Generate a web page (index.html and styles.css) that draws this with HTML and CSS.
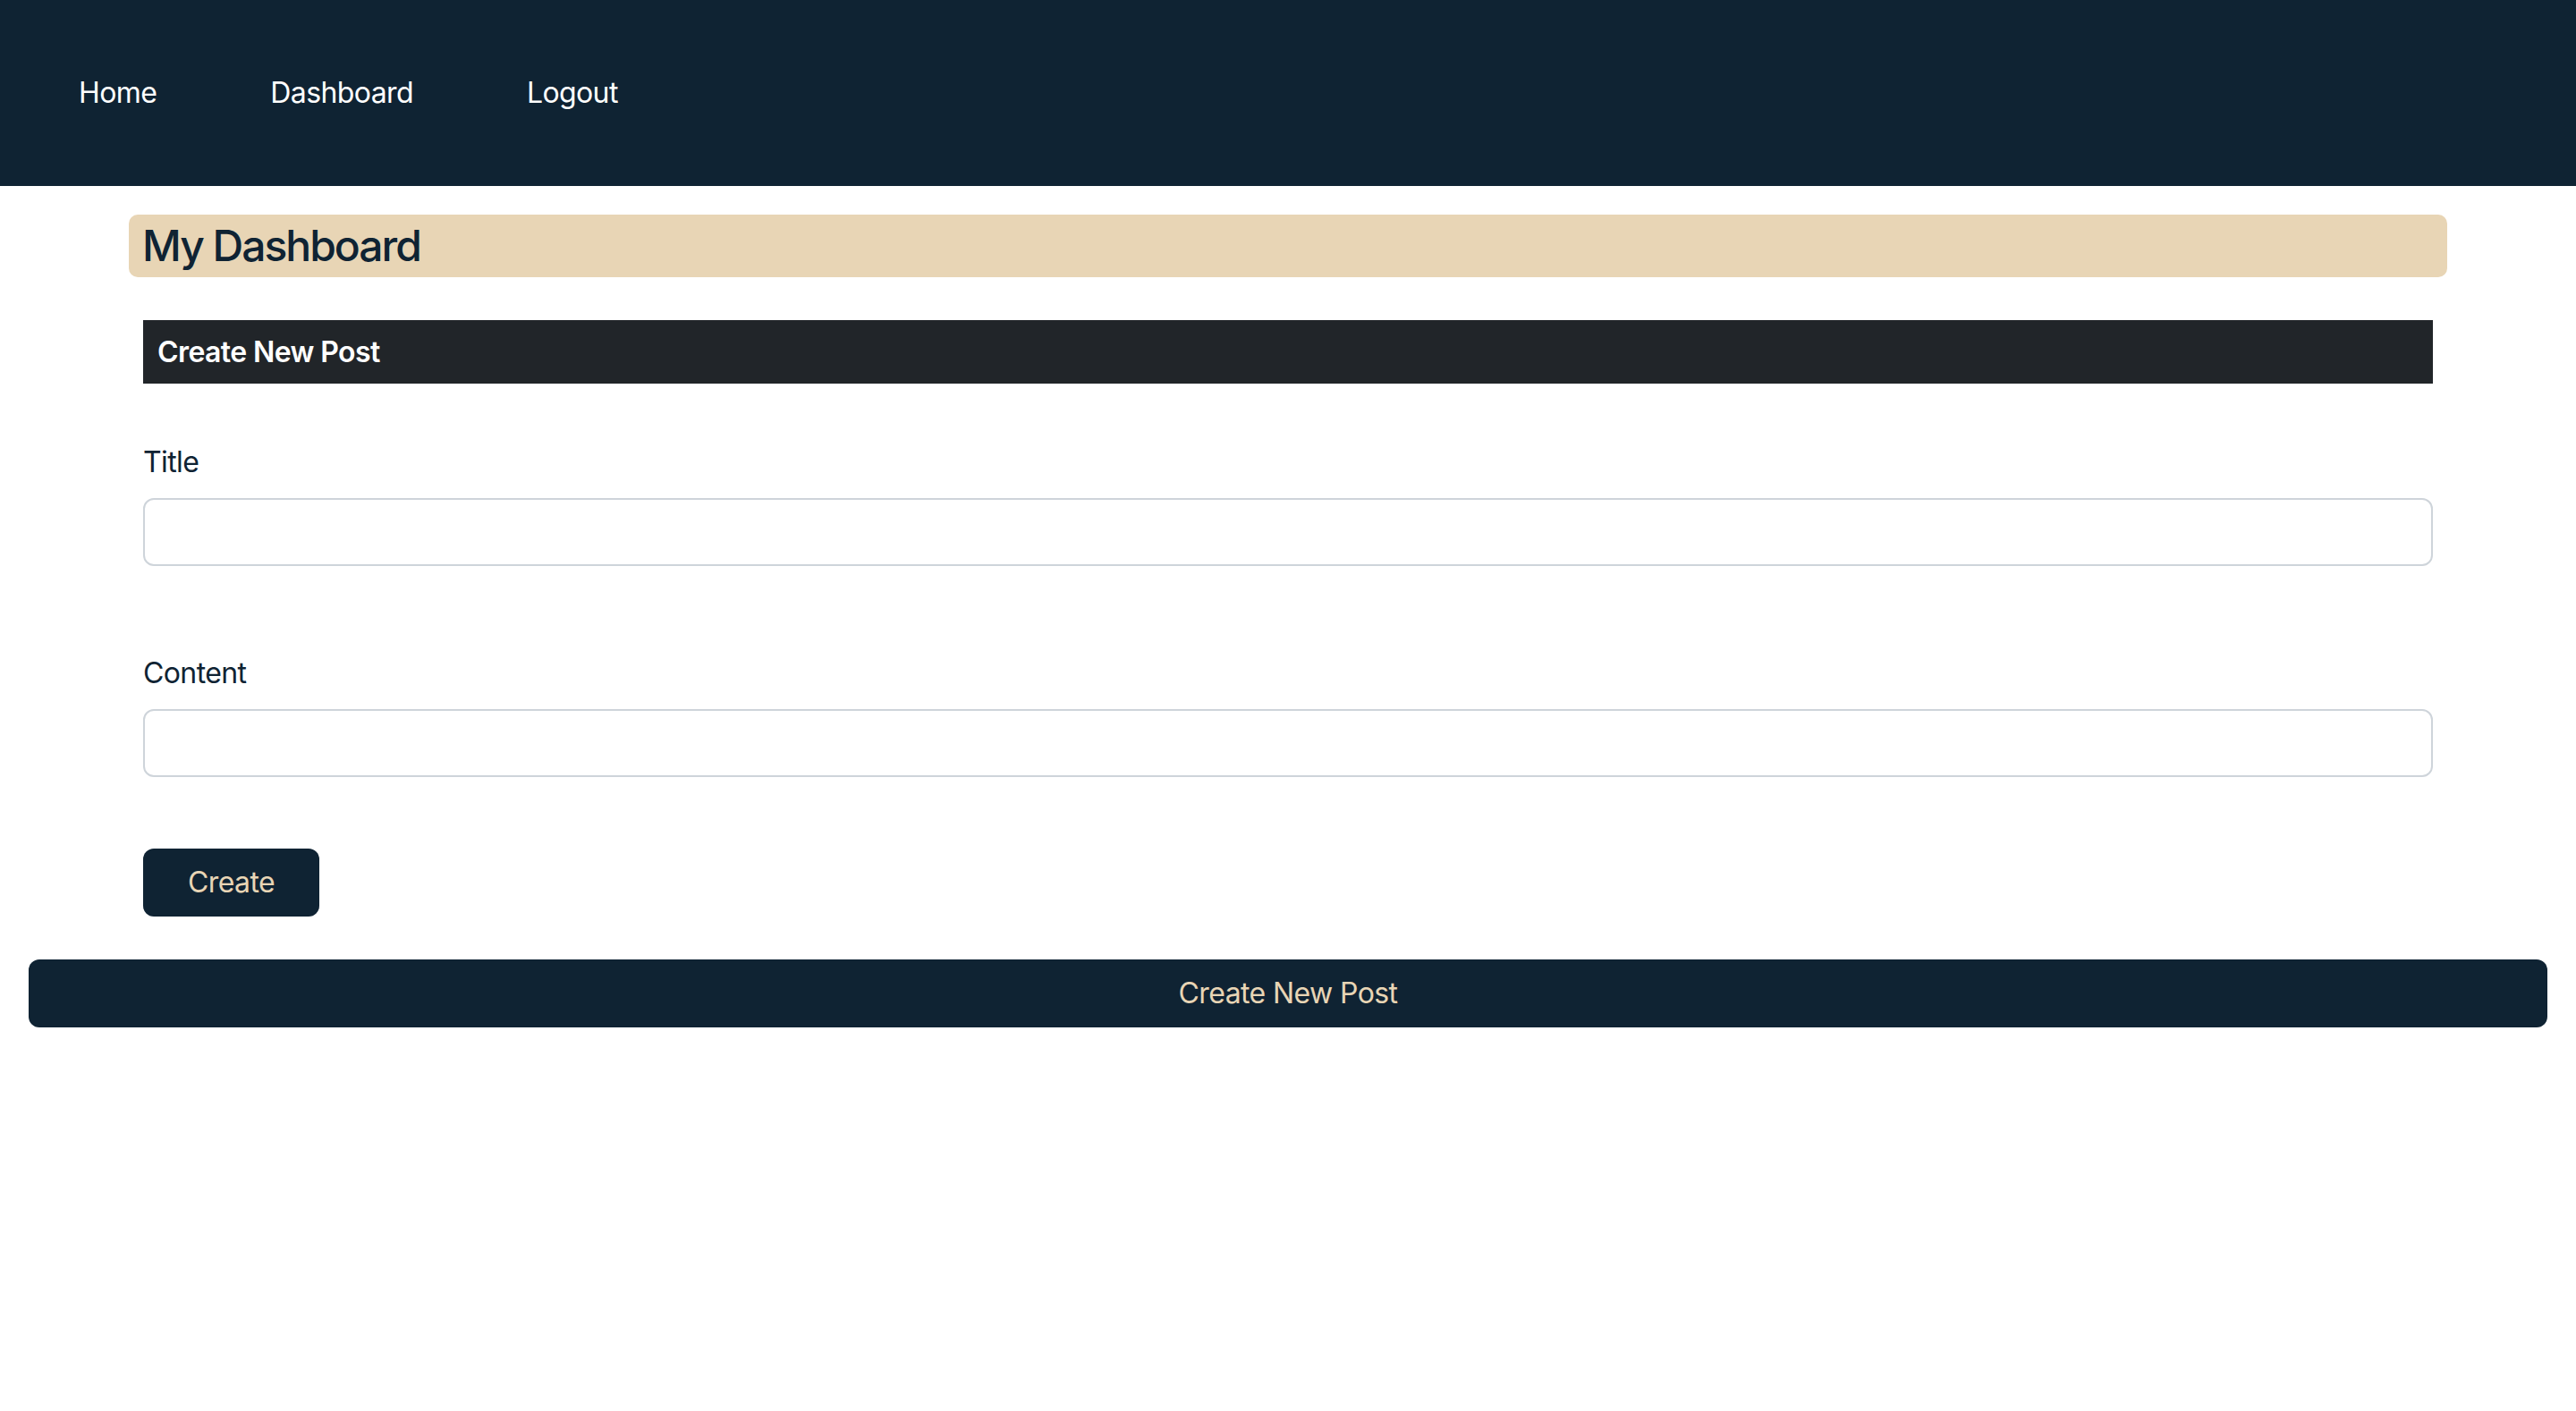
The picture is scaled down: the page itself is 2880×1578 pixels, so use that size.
FILE: index.html
```html
<!DOCTYPE html>
<html lang="en">
<head>
<meta charset="utf-8">
<title>My Dashboard</title>
<link rel="stylesheet" href="styles.css">
</head>
<body>
<nav class="topnav">
  <a class="nav-link" href="#">Home</a>
  <a class="nav-link" href="#">Dashboard</a>
  <a class="nav-link" href="#">Logout</a>
</nav>
<main class="container">
  <h1 class="page-title">My Dashboard</h1>
  <section class="post-form">
    <h2 class="form-header">Create New Post</h2>
    <form class="form">
      <div class="form-group">
        <label class="form-label" for="title">Title</label>
        <input class="form-control" id="title" type="text">
      </div>
      <div class="form-group form-group-content">
        <label class="form-label" for="content">Content</label>
        <input class="form-control" id="content" type="text">
      </div>
      <button class="btn-create" type="button">Create</button>
    </form>
  </section>
</main>
<button class="btn-new-post" type="button">Create New Post</button>
</body>
</html>
```

FILE: styles.css
```css
* {
  box-sizing: border-box;
}

html, body {
  margin: 0;
  padding: 0;
  background: #ffffff;
}

body {
  font-family: Inter, "Liberation Sans", Arial, sans-serif;
  color: #0f2333;
  letter-spacing: -0.6px;
}

.topnav {
  height: 208px;
  background: #0f2333;
  display: flex;
  align-items: center;
  gap: 127px;
  padding-left: 88px;
}

.nav-link {
  color: #ffffff;
  text-decoration: none;
  font-size: 32px;
  line-height: 48px;
  font-weight: 400;
}

.container {
  margin: 0 144px;
  padding-top: 32px;
}

.page-title {
  margin: 0;
  background: #e8d5b5;
  border-radius: 10px;
  padding: 6px 14px 6px 15px;
  font-size: 48px;
  line-height: 58px;
  font-weight: 500;
  letter-spacing: -2px;
  color: #0f2333;
}

.post-form {
  margin-top: 48px;
  padding: 0 16px;
}

.form-header {
  margin: 0;
  background: #212529;
  color: #ffffff;
  font-size: 32px;
  line-height: 48px;
  font-weight: 600;
  padding: 12px 16px 11px;
}

.form {
  display: flex;
  flex-direction: column;
  align-items: flex-start;
}

.form-group {
  width: 100%;
  margin-top: 64px;
}

.form-group-content {
  margin-top: 96px;
}

.form-label {
  display: block;
  font-size: 32px;
  line-height: 48px;
  margin-bottom: 16px;
  color: #0f2333;
}

.form-control {
  display: block;
  width: 100%;
  height: 76px;
  border: 2px solid #ced4da;
  border-radius: 12px;
  background: #ffffff;
  font-family: inherit;
  font-size: 32px;
  padding: 12px 24px;
  margin: 0;
}

.btn-create {
  margin-top: 80px;
  height: 76px;
  padding: 0 50px;
  border: none;
  border-radius: 12px;
  background: #0f2333;
  color: #e8d5b5;
  font-family: inherit;
  font-size: 32px;
  line-height: 48px;
  font-weight: 400;
  letter-spacing: -0.6px;
}

.btn-new-post {
  display: block;
  width: calc(100% - 64px);
  margin: 48px 32px 0;
  height: 76px;
  border: none;
  border-radius: 12px;
  background: #0f2333;
  color: #e8d5b5;
  font-family: inherit;
  font-size: 32px;
  line-height: 48px;
  font-weight: 400;
  letter-spacing: -0.6px;
}
```
